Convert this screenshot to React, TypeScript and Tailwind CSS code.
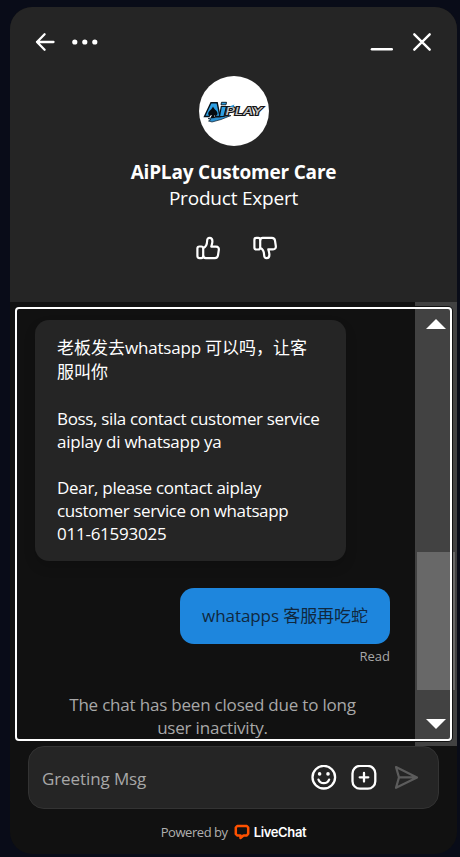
import React from "react";

const Thumb = ({ down = false }: { down?: boolean }) => (
  <button className={down ? "-scale-y-100" : ""}>
    <svg
      width="24"
      height="24"
      viewBox="0 0 24 24"
      fill="none"
      stroke="#fff"
      strokeWidth="2.2"
      strokeLinejoin="round"
    >
      <rect x="1.4" y="10.5" width="5.8" height="11.6" rx="2" />
      <path d="M7.2 12C9.4 11.2 11 8.8 11.1 5.2C11.1 3 12 1.8 13.6 1.8C15.4 1.8 16.4 3.2 16.4 5.2C16.4 7.4 15.6 9.2 15.3 10.6H20C22.2 10.6 23.1 12.2 22.8 14L22 19.4C21.7 21.3 20.6 22.1 18.9 22.1H9.8C8 22.1 7.2 21 7.2 19.6" />
    </svg>
  </button>
);

const Logo = () => (
  <svg width="70" height="70" viewBox="0 0 70 70">
    <path d="M9 42.5L20 41L32 39.5L22 43.5L13 46L9.500 45L12 43.500Z" fill="#2b8fd0" stroke="#0a1a26" strokeWidth="0.7" />
    <path
      d="M5.5 40.5L12 26.8H18.2L21 40.5H16.5L15.8 38H11.5L10 40.5Z"
      fill="#2e9fe3"
      stroke="#07131c"
      strokeWidth="1.4"
    />
    <path d="M22.3 30.500H27.500L25 40.500H20.500Z" fill="#2e9fe3" stroke="#07131c" strokeWidth="1.2" />
    <path d="M22.500 26.300H27.500L27 28.800H22Z" fill="#2e9fe3" stroke="#07131c" strokeWidth="0.9" />
    <path
      d="M14 30.500C15 33.500 19 35 18.500 38C18 40 16 40 14.800 38.800L16 42H11.500L13 38.800C11.500 40 9.200 39.800 9.200 37.800C9.200 35 13 33.500 14 30.500Z"
      fill="#050a0e"
    />
    <text
      x="26.5"
      y="39"
      fontSize="10"
      fontWeight="500"
      fontStyle="italic"
      fontFamily="Inter, sans-serif"
      fill="#c4c4c4"
      stroke="#151515"
      strokeWidth="1.9"
      paintOrder="stroke"
      textLength="37"
      lengthAdjust="spacingAndGlyphs"
    >
      PLAY
    </text>
    <path d="M30.5 30.500L35.500 28.500L34 31.500Z" fill="#2595d8" />
  </svg>
);

const Header = () => (
  <header className="h-[295px] shrink-0 bg-[#252525] flex flex-col items-center">
    <div className="w-full flex justify-between pt-[23px] pl-[24px] pr-[23px]">
      <div className="flex items-center gap-[14px]">
        <svg width="23" height="24" viewBox="0 0 23 24" fill="none" stroke="#fff" strokeWidth="2.3" strokeLinecap="round" strokeLinejoin="round">
          <path d="M10.6 4.3L3 12L10.6 19.7M3 12H19.5" />
        </svg>
        <svg width="28" height="24" viewBox="0 0 28 24" fill="#fff">
          <circle cx="3.8" cy="12" r="2.6" />
          <circle cx="13.8" cy="12" r="2.6" />
          <circle cx="23.8" cy="12" r="2.6" />
        </svg>
      </div>
      <div className="flex items-center gap-[17px]">
        <svg width="24" height="24" viewBox="0 0 24 24" stroke="#fff" strokeWidth="2.6" strokeLinecap="round">
          <path d="M3 19.3H22.7" />
        </svg>
        <svg width="24" height="24" viewBox="0 0 24 24" stroke="#fff" strokeWidth="2.4" strokeLinecap="round">
          <path d="M4.300 4.300L19.700 19.700M19.700 4.300L4.300 19.700" />
        </svg>
      </div>
    </div>
    <div className="mt-[22px] size-[70px] rounded-full bg-white overflow-hidden">
      <Logo />
    </div>
    <h1 className="mt-[13px] text-[19px] leading-[26px] font-bold tracking-[-0.2px] whitespace-nowrap">
      AiPLay Customer Care
    </h1>
    <p className="text-[19px] leading-[26px] tracking-[-0.2px] whitespace-nowrap">Product Expert</p>
    <div className="mt-[25px] flex gap-[33px] pl-[6px]">
      <Thumb />
      <Thumb down />
    </div>
  </header>
);

const Messages = () => (
  <main className="relative h-[444px] shrink-0 flex">
    <div className="w-[405px] h-full overflow-hidden px-[25px] pt-[18px]">
      <div className="w-[311px] h-[241px] rounded-[14px] bg-[#252525] shadow-[0_6px_12px_rgba(0,0,0,0.15)] px-[22px] py-[16px] text-[17px] leading-[23px] whitespace-nowrap">
        <p className="leading-[24px]">老板发去<span className="tracking-[-0.2px]">whatsapp </span>可以吗，让客</p>
        <p className="leading-[24px]">服叫你</p>
        <p className="mt-[23px] tracking-[-0.34px]">Boss, sila contact customer service</p>
        <p className="tracking-[-0.25px]">aiplay di whatsapp ya</p>
        <p className="mt-[23px] tracking-[-0.3px]">Dear, please contact aiplay</p>
        <p className="tracking-[-0.37px]">customer service on whatsapp</p>
        <p className="tracking-[-0.25px]">011-61593025</p>
      </div>
      <div className="mt-[27px] flex flex-col items-end">
        <div className="w-[210px] h-[56px] rounded-[14px] bg-[#1e86dd] text-[#10283e] flex items-center justify-center text-[17px] tracking-[-0.08px] whitespace-nowrap">
          whatapps 客服再吃蛇
        </div>
        <p className="mt-[3px] text-[13px] leading-[18px] text-[#a8a8a8]">Read</p>
      </div>
      <div className="mt-[28px] text-center text-[17px] leading-[23px] text-[#a8a8a8] tracking-[-0.2px] whitespace-nowrap">
        <p>The chat has been closed due to long</p>
        <p>user inactivity.</p>
      </div>
    </div>
    <div className="w-[42px] h-full bg-[#424242] flex flex-col items-center">
      <svg className="mt-[17px]" width="20" height="10" viewBox="0 0 20 10">
        <path d="M0 10L10 0L20 10Z" fill="#fff" />
      </svg>
      <div className="mt-[223px] w-[38px] h-[138px] bg-[#686868]" />
      <svg className="mt-[29px]" width="20" height="10" viewBox="0 0 20 10">
        <path d="M0 0L10 10L20 0Z" fill="#fff" />
      </svg>
    </div>
    <div className="absolute inset-[5px] rounded-[4px] border-2 border-white shadow-[0_0_0_1px_#111] pointer-events-none" />
  </main>
);

const Composer = () => (
  <div className="ml-[18px] w-[411px] h-[63px] shrink-0 rounded-[16px] border border-[#333] bg-[#252525] flex items-center pl-[13px] pr-[19px]">
    <span className="flex-1 pt-[3px] text-[17px] tracking-[-0.1px] text-[#a8a8a8] whitespace-nowrap">Greeting Msg</span>
    <div className="flex items-center gap-[14px]">
      <svg width="26" height="26" viewBox="0 0 26 26" fill="none" stroke="#fff" strokeWidth="2.3" strokeLinecap="round">
        <circle cx="12.8" cy="12.2" r="11.3" />
        <path d="M7.500 14.600C8.500 17 10.300 18.200 12.800 18.200S17.100 17 18.100 14.600" />
        <circle cx="8.600" cy="8.900" r="1.800" fill="#fff" stroke="none" />
        <circle cx="17" cy="8.900" r="1.800" fill="#fff" stroke="none" />
      </svg>
      <svg width="26" height="26" viewBox="0 0 26 26" fill="none" stroke="#fff" strokeWidth="2.3" strokeLinecap="round">
        <rect x="1.500" y="0.900" width="22.800" height="22.800" rx="7.500" />
        <path d="M13 8V16.600M8.700 12.300H17.300" />
      </svg>
      <svg className="ml-[2px]" width="26" height="26" viewBox="0 0 26 26" fill="none" stroke="#5c5c5c" strokeWidth="2.2" strokeLinejoin="round">
        <path d="M3 2L24 12.400L3 22.800L6 12.400ZM6 12.400H22" />
      </svg>
    </div>
  </div>
);

const App = () => {
  return (
    <div className="w-[460px] h-[857px] overflow-hidden bg-[#090c18] pt-[7px] pl-[10px] text-white font-['Open_Sans','Noto_Sans_CJK_SC',sans-serif]">
      <div className="w-[447px] h-[847px] rounded-[22px] overflow-hidden bg-[#111] flex flex-col">
        <Header />
        <Messages />
        <Composer />
        <footer className="mt-[13px] flex items-center justify-center text-[13px] leading-[20px] text-[#b0b0b0]">
          <span className="tracking-[-0.45px]">Powered by</span>
          <svg className="ml-[6px]" width="16" height="16" viewBox="0 0 16 16" fill="none" stroke="#ff5100" strokeWidth="2.5" strokeLinejoin="round">
            <path d="M3.200 2H12.800L14.200 3.500V9.800L12.800 11.500H9.500L6.500 14V11.500H3.200L1.800 10V3.500Z" />
          </svg>
          <span className="ml-[4px] font-['Inter'] font-semibold text-[13px] tracking-[-0.35px] text-white">LiveChat</span>
        </footer>
      </div>
    </div>
  );
};
export default App;
